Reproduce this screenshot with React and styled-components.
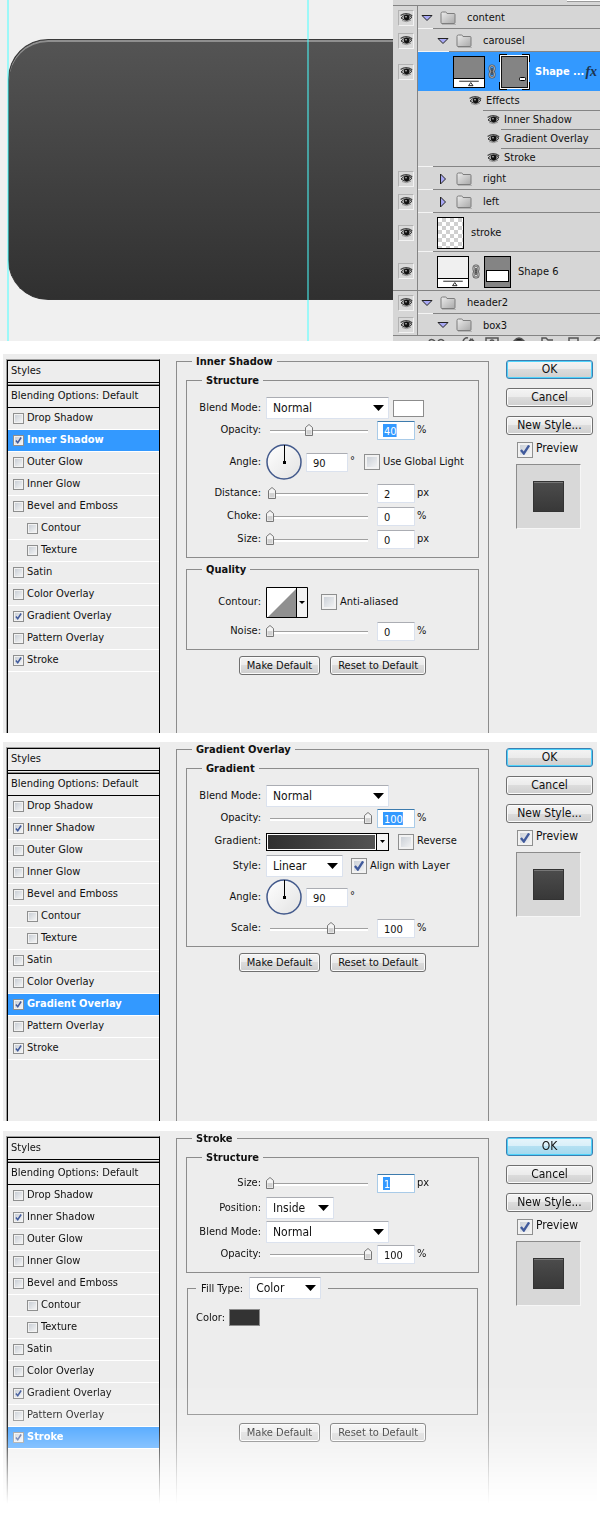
import React from "react";
import styled, { createGlobalStyle, css } from "styled-components";

const Global = createGlobalStyle`
  * { box-sizing: border-box; }
  body {
    margin: 0;
    background: #fff;
    color: #111;
    font-family: "DejaVu Sans Condensed", "Noto Sans", sans-serif;
    font-size: 11px;
    line-height: 15px;
  }
  button, input, select { font: inherit; color: inherit; margin: 0; }
`;

const Page = styled.main`
  display: flex;
  flex-direction: column;
`;

/* ---------- canvas and layers ---------- */

const Workspace = styled.section`
  display: flex;
  height: 341px;
  margin-bottom: 13px;
`;

const Canvas = styled.div`
  position: relative;
  flex: 1;
  min-width: 0;
  overflow: hidden;
  background: #f0f0f0;
  padding: 39px 0 0 8px;
`;

const CarouselShape = styled.div`
  height: 261px;
  border-radius: 40px 0 0 40px;
  border: 1px solid #333;
  border-top-color: #3a3a3a;
  border-right: 0;
  box-shadow: inset 0 2px 0 #8f8f8f;
  background: linear-gradient(#545454, #303030);
`;

const Guide = styled.i`
  position: absolute;
  top: 0;
  bottom: 0;
  left: ${(p) => p.$at}px;
  width: 2px;
  background: rgba(74, 255, 255, 0.5);
`;

const LayersPanel = styled.aside`
  display: flex;
  flex-direction: column;
  width: 207px;
  flex: none;
  overflow: hidden;
  background: #d6d6d6;
`;

const PanelTop = styled.div`
  height: 6px;
  flex: none;
  border-bottom: 1px solid #848484;
  padding-left: 174px;
`;

const PanelTopField = styled.div`
  height: 2px;
  background: #fff;
  border-bottom: 1px solid #9a9a9a;
`;

const LayerRow = styled.div`
  display: flex;
  flex: none;
  height: ${(p) => p.$h}px;
`;

const EyeCell = styled.div`
  width: 25px;
  flex: none;
  display: flex;
  align-items: center;
  padding-left: 5px;
  border-right: 1px solid #848484;
  border-bottom: ${(p) => (p.$line ? "1px solid #848484" : "0")};
`;

const EyeButton = styled.button`
  display: flex;
  align-items: center;
  justify-content: center;
  width: 16px;
  height: 16px;
  padding: 0;
  border: 1px solid #b2b2b2;
  border-right-color: #f2f2f2;
  border-bottom-color: #f2f2f2;
  background: #d9d9d9;
`;

const LayerBody = styled.div`
  flex: 1;
  min-width: 0;
  display: flex;
  align-items: center;
  padding-left: ${(p) => p.$indent}px;
  background: linear-gradient(
      to right,
      ${(p) => p.$lead || "#f4f4f4"} ${(p) => p.$from || 0}px,
      #848484 ${(p) => p.$from || 0}px
    )
    bottom / 100% 1px no-repeat;
  ${(p) =>
    p.$active &&
    css`
      background: #3399ff;
      color: #fff;
      font-weight: bold;
    `}
`;

const EffectBody = styled(LayerBody)`
  padding-bottom: 2px;
`;

const Disclosure = styled.button`
  display: flex;
  justify-content: center;
  width: 14px;
  padding: 0;
  border: 0;
  background: none;
`;

const LayerName = styled.span`
  margin-left: ${(p) => p.$gap}px;
  white-space: nowrap;
`;

const FolderIcon = styled.svg`
  display: block;
  flex: none;
  margin-left: 6px;
`;

const FxMark = styled.span`
  margin-left: 1px;
  color: #1c3450;
  font: italic bold 14px/15px "Liberation Serif", serif;
`;

const Thumb = styled.div`
  width: ${(p) => p.$w}px;
  height: 32px;
  flex: none;
  border: 1px solid #000;
  background: ${(p) => p.$fill};
  display: flex;
  flex-direction: column;
  justify-content: flex-end;
`;

const Checker = styled(Thumb)`
  background: repeating-conic-gradient(#cfcfcf 0 25%, #fff 0 50%) 0 0 / 8px 8px;
`;

const ThumbSlider = styled.svg`
  display: block;
  background: #fff;
  border-top: 1px solid #000;
`;

const PanelTools = styled.svg`
  display: block;
  flex: none;
`;

const Eye = () => (
  <svg width="13" height="11" viewBox="0 0 13 11" aria-hidden="true">
    <path d="M1 6Q6 .2 12 5.2Q7.5 11 1 6Z" fill="#b9b9b9" stroke="#333" />
    <path d="M.6 3.6Q6 -.5 12.2 3.8" fill="none" stroke="#444" strokeWidth="1.2" />
    <circle cx="6.7" cy="5.5" r="2.8" fill="#111" />
    <circle cx="6" cy="4.7" r=".8" fill="#ddd" />
    <path d="M2 8.5Q6.5 11 11 8.2" fill="none" stroke="#777" strokeWidth=".7" />
  </svg>
);

const Folder = () => (
  <FolderIcon width="17" height="14" viewBox="0 0 17 14" aria-hidden="true">
    <defs>
      <linearGradient id="folderFill" x1="0" y1="0" x2="1" y2="1">
        <stop offset="0" stopColor="#ececec" />
        <stop offset="1" stopColor="#a8a8a8" />
      </linearGradient>
    </defs>
    <path d="M2 13.5H16" stroke="#b4b4b4" />
    <path
      d="M1 2.5Q1 1 2.5 1H5.5Q6.5 1 7 2.5H14Q15 2.5 15 3.5V11.5Q15 12.5 14 12.5H2Q1 12.5 1 11.5Z"
      fill="url(#folderFill)"
      stroke="#7d7d7d"
    />
  </FolderIcon>
);

const TriangleDown = () => (
  <svg width="12" height="8" viewBox="0 0 12 8" aria-hidden="true">
    <path d="M1 1.5H11L6 6.5Z" fill="#a9a9f5" stroke="#222" />
  </svg>
);

const TriangleRight = () => (
  <svg width="8" height="12" viewBox="0 0 8 12" aria-hidden="true">
    <path d="M1.5 1V11L6.5 6Z" fill="#a9a9f5" stroke="#222" />
  </svg>
);

const Chain = () => (
  <svg width="14" height="15" viewBox="0 0 14 15" aria-hidden="true">
    <g fill="none">
      <rect x="4.5" y="1.5" width="5" height="6" rx="2.5" stroke="#555" strokeWidth="2" />
      <rect x="4.5" y="7.5" width="5" height="6" rx="2.5" stroke="#555" strokeWidth="2" />
      <rect x="4.5" y="1.5" width="5" height="6" rx="2.5" stroke="#ccc" strokeWidth=".7" />
      <rect x="4.5" y="7.5" width="5" height="6" rx="2.5" stroke="#ccc" strokeWidth=".7" />
      <path d="M7 4V11" stroke="#444" strokeWidth="1.5" />
    </g>
  </svg>
);

const ShapeThumb = ({ fill }) => (
  <Thumb $w={32} $fill={fill}>
    <ThumbSlider width="30" height="9" viewBox="0 0 30 9" aria-hidden="true">
      <path d="M4 2.5H26M17 4L14.5 7.5H19.5Z" fill="none" stroke="#111" />
    </ThumbSlider>
  </Thumb>
);

const ActiveMask = () => (
  <svg width="32" height="36" viewBox="0 0 32 36" aria-hidden="true">
    <rect x="1.5" y="1.5" width="28" height="33" fill="#848484" stroke="#fff" />
    <rect x="2.5" y="2.5" width="26" height="31" fill="none" stroke="#111" />
    <path
      d="M.5 8V.5H8M23 .5H30.5V8M30.5 28V35.5H23M8 35.5H.5V28"
      fill="none"
      stroke="#000"
    />
    <rect x="20.5" y="23.5" width="6" height="3" rx="1" fill="#fff" stroke="#000" />
  </svg>
);

const RectMask = () => (
  <svg width="28" height="32" viewBox="0 0 28 32" aria-hidden="true">
    <rect x="1.5" y=".5" width="26" height="31" fill="#848484" stroke="#000" />
    <rect x="3.5" y="14.5" width="22" height="11" fill="#fff" stroke="#000" />
  </svg>
);

const Group = ({ name, indent, from, h = 23, open, line }) => (
  <LayerRow $h={h}>
    <EyeCell $line={line}>
      <EyeButton aria-label={`Toggle ${name}`}><Eye /></EyeButton>
    </EyeCell>
    <LayerBody $indent={indent} $from={from}>
      <Disclosure aria-label={`Expand ${name}`}>
        {open ? <TriangleDown /> : <TriangleRight />}
      </Disclosure>
      <Folder />
      <LayerName $gap={10}>{name}</LayerName>
    </LayerBody>
  </LayerRow>
);

const Effect = ({ name, indent, from, h = 19, lead = "#d6d6d6" }) => (
  <LayerRow $h={h}>
    <EyeCell />
    <EffectBody $indent={indent} $from={from} $lead={lead}>
      <Eye />
      <LayerName $gap={4}>{name}</LayerName>
    </EffectBody>
  </LayerRow>
);

const Layers = () => (
  <LayersPanel>
    <PanelTop><PanelTopField /></PanelTop>
    <Group name="content" indent={2} from={15} open />
    <Group name="carousel" indent={18} from={31} open />
    <LayerRow $h={39}>
      <EyeCell>
        <EyeButton aria-label="Toggle shape"><Eye /></EyeButton>
      </EyeCell>
      <LayerBody $indent={35} $active>
        <ShapeThumb fill="#848484" />
        <Chain />
        <ActiveMask />
        <LayerName $gap={4}>Shape ...</LayerName>
        <FxMark>fx</FxMark>
      </LayerBody>
    </LayerRow>
    <Effect name="Effects" indent={51} from={65} h={20} />
    <Effect name="Inner Shadow" indent={69} from={83} />
    <Effect name="Gradient Overlay" indent={69} from={83} />
    <Effect name="Stroke" indent={69} from={15} h={18} lead="#f4f4f4" />
    <Group name="right" indent={18} from={15} />
    <Group name="left" indent={18} from={15} />
    <LayerRow $h={39}>
      <EyeCell>
        <EyeButton aria-label="Toggle stroke"><Eye /></EyeButton>
      </EyeCell>
      <LayerBody $indent={19} $from={15}>
        <Checker $w={27} />
        <LayerName $gap={7}>stroke</LayerName>
      </LayerBody>
    </LayerRow>
    <LayerRow $h={39}>
      <EyeCell $line>
        <EyeButton aria-label="Toggle Shape 6"><Eye /></EyeButton>
      </EyeCell>
      <LayerBody $indent={19}>
        <ShapeThumb fill="#f0f0f0" />
        <Chain />
        <RectMask />
        <LayerName $gap={7}>Shape 6</LayerName>
      </LayerBody>
    </LayerRow>
    <Group name="header2" indent={2} from={15} open />
    <Group name="box3" indent={18} h={22} open line />
    <PanelTools width="207" height="5" viewBox="0 0 207 5" aria-hidden="true">
      <g fill="none" stroke="#555" strokeWidth="1.5">
        <path d="M36 5Q38 2 42 5M45 5Q48 2 51 5M70 5Q72 1 75 2M76 5L80 3M77 3L81 5" />
        <path d="M93 5V2H105V5M97 5Q99 3 101 5" />
        <path d="M121 5Q126 -1 131 5Z" fill="#222" />
        <path d="M149 5V2H153L155 4H160M176 5V2H185V5M201 5L204 2H207" />
      </g>
    </PanelTools>
  </LayersPanel>
);

/* ---------- layer style dialogs ---------- */

const Dialog = styled.section`
  display: flex;
  min-height: ${(p) => (p.$fade ? 385 : 379)}px;
  margin: 0 3px ${(p) => p.$below || 0}px;
  padding: 0 4px 0 3px;
  background: #ededed;
  ${(p) =>
    p.$fade &&
    css`
      mask-image: linear-gradient(
        #000 250px,
        rgba(0, 0, 0, 0.8) 296px,
        rgba(0, 0, 0, 0.6) 316px,
        rgba(0, 0, 0, 0.25) 346px,
        transparent 373px
      );
    `}
`;

const StyleList = styled.div`
  width: 154px;
  flex: none;
  margin: 5px 16px 0 0;
  border: solid #000;
  border-width: 1px 1px 0 1px;
  box-shadow: inset 1px 1px 0 #000;
  border-left-color: #a0a0a0;
  border-top-color: #a0a0a0;
  padding: 1px 0 0 1px;
`;

const ListTitle = styled.h2`
  margin: 0 0 2px;
  height: 22px;
  padding-left: 3px;
  border-bottom: 1px solid #000;
  font-size: 11px;
  font-weight: normal;
  line-height: 19px;
`;

const ListDefault = styled.div`
  height: 23px;
  padding-left: 3px;
  border-top: 1px solid #000;
  border-bottom: 1px solid #000;
  box-shadow: 0 -1px 0 #8f8f8f;
  line-height: 20px;
`;

const StyleItem = styled.label`
  display: flex;
  align-items: center;
  height: 22px;
  gap: 3px;
  padding: 0 0 0 ${(p) => (p.$sub ? 19 : 5)}px;
  border-bottom: 1px solid #fff;
  ${(p) =>
    p.$active &&
    css`
      background: #3399ff;
      color: #fff;
      font-weight: bold;
    `}
`;

const ItemText = styled.span`
  padding-bottom: 3px;
`;

const tickArt = `url("data:image/svg+xml,%3Csvg xmlns='http://www.w3.org/2000/svg' viewBox='0 0 12 12'%3E%3Cpath d='M2.5 6L5 9L9.5 2' fill='none' stroke='%23405a9c' stroke-width='2'/%3E%3C/svg%3E") center / 100% 100% no-repeat,`;

const Check = styled.input.attrs({ type: "checkbox" })`
  appearance: none;
  flex: none;
  width: ${(p) => p.$size}px;
  height: ${(p) => p.$size}px;
  border: 1px solid #8e8f8f;
  background: ${(p) => (p.checked ? tickArt : "")}
    linear-gradient(135deg, #c4cad2, #f8f8f8);
  box-shadow: inset 0 0 0 ${(p) => (p.$size > 12 ? 2 : 1)}px #f2f2f2;
`;

const Settings = styled.fieldset`
  flex: 1;
  min-width: 0;
  margin: 0;
  border: 1px solid #8c8c8c;
  border-bottom: 0;
  padding: 4px 9px 0;
`;

const Legend = styled.legend`
  margin-left: ${(p) => (p.$inner ? 15 : 6)}px;
  padding: 0 4px;
  height: 15px;
  font-weight: bold;
`;

const Section = styled.fieldset`
  min-width: 0;
  margin: 0 0 4px;
  border: 1px solid #8c8c8c;
  padding: 9px 0 8px;
`;

const FillSection = styled(Section)`
  min-height: 138px;
  margin: 0 1px 6px;
  padding: 10px 8px;
`;

const FillLegend = styled.legend`
  display: flex;
  align-items: center;
  height: 22px;
  padding: 0 7px 0 5px;
`;

const ColorLine = styled.div`
  display: flex;
  align-items: center;
  gap: 4px;
`;

const Row = styled.div`
  display: flex;
  align-items: center;
  height: ${(p) => p.$h || 19}px;
  & + & { margin-top: 4px; }
`;

const SelectRow = styled(Row)`
  height: 22px;
  margin-bottom: -2px;
  ${Row} + && { margin-top: 4px; }
`;

const Label = styled.label`
  width: 74px;
  flex: none;
  margin-right: 5px;
  padding-bottom: 2px;
  text-align: right;
  white-space: nowrap;
`;

const InlineLabel = styled.label`
  margin-right: 6px;
`;

const Unit = styled.span`
  margin-left: 2px;
  padding-bottom: 3px;
`;

const NumberBox = styled.input`
  width: ${(p) => p.$w || 38}px;
  height: 19px;
  flex: none;
  padding: 2px 0 0 6px;
  border: 1px solid #dbe2ee;
  border-top-color: #abadb3;
  border-radius: 1px;
  background: #fff;
  ${(p) =>
    p.$selected &&
    css`
      border-color: #a9cbe8;
      border-top-color: #3d7bad;
      color: #fff;
      background: linear-gradient(#3399ff, #3399ff) 5px 2px /
        calc(${p.$selected}ch + 1px) 13px no-repeat #fff;
    `}
`;

const SpacedNumber = styled(NumberBox)`
  margin-left: 4px;
`;

const thumbArt = `url("data:image/svg+xml,%3Csvg xmlns='http://www.w3.org/2000/svg' width='8' height='12'%3E%3Cpath d='M.5 3.5L4 .5L7.5 3.5V11.5H.5Z' fill='%23f4f4f4' stroke='%23777'/%3E%3Cpath d='M1.5 6H6.5V10.5H1.5Z' fill='%23d2d2d2'/%3E%3C/svg%3E")`;

const Range = styled.input.attrs({ type: "range" })`
  appearance: none;
  width: 106px;
  height: 15px;
  flex: none;
  margin: 0 5px 2px 0;
  background:
    linear-gradient(#a0a0a0, #a0a0a0) 4px 8px / calc(100% - 8px) 1px no-repeat,
    linear-gradient(#fff, #fff) 4px 9px / calc(100% - 8px) 2px no-repeat;
  &::-webkit-slider-thumb {
    appearance: none;
    width: 8px;
    height: 12px;
    background: ${thumbArt} no-repeat;
  }
`;

const SelectWrap = styled.span`
  display: inline-grid;
  align-items: center;
  justify-items: end;
  width: ${(p) => p.$w}px;
  & > * { grid-area: 1 / 1; }
  & > svg { margin-right: 5px; pointer-events: none; }
`;

const SelectBox = styled.select`
  appearance: none;
  width: 100%;
  height: 22px;
  padding: 0 0 0 6px;
  border: 1px solid #dbe2ee;
  border-top-color: #abadb3;
  border-radius: 1px;
  background: #fff;
  font-size: 12px;
`;

const Swatch = styled.button`
  width: 31px;
  height: 17px;
  padding: 0;
  margin-left: ${(p) => p.$gap || 0}px;
  border: 1px solid #8c8c8c;
  background: ${(p) => p.$fill};
`;

const CheckLabel = styled.label`
  display: flex;
  align-items: center;
  gap: 3px;
  margin-left: ${(p) => p.$gap}px;
`;

const CheckText = styled.span`
  padding-bottom: 2px;
  font-size: ${(p) => p.$size || 11}px;
`;

const ContourButton = styled.button`
  display: flex;
  padding: 0;
  border: 0;
  background: none;
`;

const GradientButton = styled.button`
  display: flex;
  align-items: center;
  width: 123px;
  height: 18px;
  padding: 0;
  border: 1px solid #000;
  background: #f4f4f4;
`;

const GradientRamp = styled.span`
  flex: 1;
  align-self: stretch;
  border: 1px solid #fff;
  box-shadow: 1px 0 0 #000;
  background: linear-gradient(to right, #303030, #545454);
`;

const SmallArrow = styled.svg`
  margin: 0 3px 0 4px;
`;

const Defaults = styled.div`
  display: flex;
  justify-content: center;
  gap: 10px;
  padding-top: 2px;
`;

const PushButton = styled.button`
  height: 19px;
  padding: 0 7px;
  border: 1px solid #707070;
  border-radius: 3px;
  background: linear-gradient(#f4f4f4, #ebebeb 50%, #dcdcdc 50%, #cfcfcf);
  box-shadow: inset 0 0 0 1px #fbfbfb;
  line-height: 17px;
  white-space: nowrap;
`;

const ActionButton = styled(PushButton)`
  width: 100%;
  margin-bottom: 9px;
  padding: 0;
  font-size: 12px;
  ${(p) =>
    p.$primary &&
    css`
      border-color: #3c7fb1;
      box-shadow: inset 0 0 0 1px #4fd3fb;
    `}
  ${(p) =>
    p.$glow &&
    css`
      background: linear-gradient(#e8f5fb, #d8eff9 50%, #b4e0f2 50%, #a4d8ee);
    `}
`;

const Actions = styled.div`
  width: 87px;
  flex: none;
  margin: 6px 0 0 17px;
`;

const PreviewLabel = styled(CheckLabel)`
  margin: -3px 0 6px 11px;
`;

const PreviewWell = styled.div`
  display: flex;
  align-items: center;
  justify-content: center;
  width: 65px;
  height: 65px;
  margin-left: 10px;
  border: 1px solid #f6f6f6;
  border-top-color: #8c8c8c;
  border-left-color: #8c8c8c;
  background: #d8d8d8;
`;

const PreviewTile = styled.div`
  width: 31px;
  height: 31px;
  border: 1px solid #333;
  background: linear-gradient(#4c4c4c, #383838);
  box-shadow: inset 0 1px 0 #777;
`;

const noop = () => {};

const STYLES = [
  "Drop Shadow",
  "Inner Shadow",
  "Outer Glow",
  "Inner Glow",
  "Bevel and Emboss",
  "Contour",
  "Texture",
  "Satin",
  "Color Overlay",
  "Gradient Overlay",
  "Pattern Overlay",
  "Stroke",
];
const ENABLED = ["Inner Shadow", "Gradient Overlay", "Stroke"];
const NESTED = ["Contour", "Texture"];

const Combo = ({ id, w, value }) => (
  <SelectWrap $w={w}>
    <SelectBox id={id} value={value} onChange={noop}>
      <option>{value}</option>
    </SelectBox>
    <svg width="11" height="6" viewBox="0 0 11 6" aria-hidden="true">
      <path d="M0 0H11L5.5 6Z" fill="#000" />
    </svg>
  </SelectWrap>
);

const SelectField = ({ id, label, w, value, children }) => (
  <SelectRow>
    <Label htmlFor={id}>{label}</Label>
    <Combo id={id} w={w} value={value} />
    {children}
  </SelectRow>
);

const SliderField = ({ id, label, at, value, unit, selected }) => (
  <Row>
    <Label htmlFor={id}>{label}</Label>
    <Range aria-label={label} value={at} onChange={noop} />
    <NumberBox
      id={id}
      value={value}
      onChange={noop}
      $selected={selected ? value.length : 0}
    />
    <Unit>{unit}</Unit>
  </Row>
);

const Option = ({ label, gap, checked = false }) => (
  <CheckLabel $gap={gap}>
    <Check $size={16} checked={checked} onChange={noop} />
    <CheckText>{label}</CheckText>
  </CheckLabel>
);

const AngleField = ({ id, children }) => (
  <Row $h={36}>
    <Label htmlFor={id}>Angle:</Label>
    <svg width="36" height="36" viewBox="0 0 36 36" aria-hidden="true">
      <defs>
        <linearGradient id={`${id}-dial`} x1="0" y1="0" x2="1" y2="1">
          <stop offset="0" stopColor="#fff" />
          <stop offset="1" stopColor="#e2e2e2" />
        </linearGradient>
      </defs>
      <circle cx="18" cy="18" r="17" fill={`url(#${id}-dial)`} stroke="#435a8c" strokeWidth="1.5" />
      <path d="M18.5 1V18" stroke="#000" />
      <path d="M17 17H20V20H17Z" fill="#000" />
    </svg>
    <SpacedNumber id={id} $w={42} value="90" onChange={noop} />
    <Unit>°</Unit>
    {children}
  </Row>
);

const StyleDialog = ({ active, children, below, fade }) => (
  <Dialog $below={below} $fade={fade}>
    <StyleList>
      <ListTitle>Styles</ListTitle>
      <ListDefault>Blending Options: Default</ListDefault>
      {STYLES.map((name) => (
        <StyleItem key={name} $active={name === active} $sub={NESTED.includes(name)}>
          <Check $size={11} checked={ENABLED.includes(name)} onChange={noop} />
          <ItemText>{name}</ItemText>
        </StyleItem>
      ))}
    </StyleList>
    <Settings>
      <Legend>{active}</Legend>
      {children}
      <Defaults>
        <PushButton>Make Default</PushButton>
        <PushButton>Reset to Default</PushButton>
      </Defaults>
    </Settings>
    <Actions>
      <ActionButton $primary $glow={fade}>OK</ActionButton>
      <ActionButton>Cancel</ActionButton>
      <ActionButton>New Style...</ActionButton>
      <PreviewLabel>
        <Check $size={16} checked onChange={noop} />
        <CheckText $size={12}>Preview</CheckText>
      </PreviewLabel>
      <PreviewWell><PreviewTile /></PreviewWell>
    </Actions>
  </Dialog>
);

export default function App() {
  return (
    <Page>
      <Global />
      <Workspace>
        <Canvas>
          <CarouselShape />
          <Guide $at={7} />
          <Guide $at={307} />
        </Canvas>
        <Layers />
      </Workspace>

      <StyleDialog active="Inner Shadow" below={9}>
        <Section>
          <Legend $inner>Structure</Legend>
          <SelectField id="is-blend" label="Blend Mode:" w={123} value="Normal">
            <Swatch $gap={4} $fill="#fff" aria-label="Shadow color" />
          </SelectField>
          <SliderField id="is-opacity" label="Opacity:" at={40} value="40" unit="%" selected />
          <AngleField id="is-angle">
            <Option label="Use Global Light" gap={9} />
          </AngleField>
          <SliderField id="is-distance" label="Distance:" at={2} value="2" unit="px" />
          <SliderField id="is-choke" label="Choke:" at={0} value="0" unit="%" />
          <SliderField id="is-size" label="Size:" at={0} value="0" unit="px" />
        </Section>
        <Section>
          <Legend $inner>Quality</Legend>
          <Row $h={32}>
            <Label as="span">Contour:</Label>
            <ContourButton aria-label="Contour">
              <svg width="42" height="31" viewBox="0 0 42 31" aria-hidden="true">
                <rect x=".5" y=".5" width="41" height="30" fill="#fff" />
                <path d="M2 30L30 2V30Z" fill="#909090" />
                <path d="M31 1H41V30H31Z" fill="#f2f2f2" />
                <path d="M.5 .5H41.5V30.5H.5ZM30.5 0V31" fill="none" stroke="#000" />
                <path d="M33 14H39L36 17Z" fill="#000" />
              </svg>
            </ContourButton>
            <Option label="Anti-aliased" gap={13} />
          </Row>
          <SliderField id="is-noise" label="Noise:" at={0} value="0" unit="%" />
        </Section>
      </StyleDialog>

      <StyleDialog active="Gradient Overlay" below={10}>
        <Section>
          <Legend $inner>Gradient</Legend>
          <SelectField id="go-blend" label="Blend Mode:" w={123} value="Normal" />
          <SliderField id="go-opacity" label="Opacity:" at={100} value="100" unit="%" selected />
          <Row>
            <Label as="span">Gradient:</Label>
            <GradientButton aria-label="Gradient">
              <GradientRamp />
              <SmallArrow width="5" height="3" viewBox="0 0 5 3" aria-hidden="true">
                <path d="M0 0H5L2.5 3Z" fill="#000" />
              </SmallArrow>
            </GradientButton>
            <Option label="Reverse" gap={9} />
          </Row>
          <SelectField id="go-style" label="Style:" w={77} value="Linear">
            <Option label="Align with Layer" gap={8} checked />
          </SelectField>
          <AngleField id="go-angle" />
          <SliderField id="go-scale" label="Scale:" at={62} value="100" unit="%" />
        </Section>
      </StyleDialog>

      <StyleDialog active="Stroke" fade>
        <Section>
          <Legend $inner>Structure</Legend>
          <SliderField id="st-size" label="Size:" at={0} value="1" unit="px" selected />
          <SelectField id="st-position" label="Position:" w={68} value="Inside" />
          <SelectField id="st-blend" label="Blend Mode:" w={123} value="Normal" />
          <SliderField id="st-opacity" label="Opacity:" at={100} value="100" unit="%" />
        </Section>
        <FillSection>
          <FillLegend>
            <InlineLabel htmlFor="st-fill">Fill Type:</InlineLabel>
            <Combo id="st-fill" w={72} value="Color" />
          </FillLegend>
          <ColorLine>
            <span>Color:</span>
            <Swatch $fill="#333" aria-label="Stroke color" />
          </ColorLine>
        </FillSection>
      </StyleDialog>
    </Page>
  );
}
